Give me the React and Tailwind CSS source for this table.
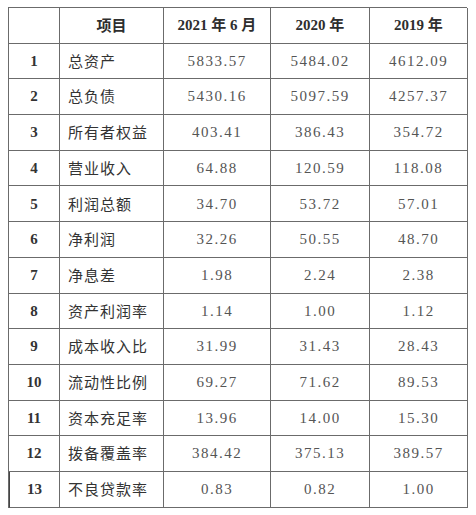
import React from 'react';

const rows = [
  ['1', '总资产', '5833.57', '5484.02', '4612.09'],
  ['2', '总负债', '5430.16', '5097.59', '4257.37'],
  ['3', '所有者权益', '403.41', '386.43', '354.72'],
  ['4', '营业收入', '64.88', '120.59', '118.08'],
  ['5', '利润总额', '34.70', '53.72', '57.01'],
  ['6', '净利润', '32.26', '50.55', '48.70'],
  ['7', '净息差', '1.98', '2.24', '2.38'],
  ['8', '资产利润率', '1.14', '1.00', '1.12'],
  ['9', '成本收入比', '31.99', '31.43', '28.43'],
  ['10', '流动性比例', '69.27', '71.62', '89.53'],
  ['11', '资本充足率', '13.96', '14.00', '15.30'],
  ['12', '拨备覆盖率', '384.42', '375.13', '389.57'],
  ['13', '不良贷款率', '0.83', '0.82', '1.00'],
];

// shared cell look: right + bottom rule, the grid itself draws top + left
const cell = 'flex items-center border-r border-b border-[#6b6b6b] text-[15px]';
const serif = "font-['Liberation_Serif','Noto_Sans_CJK_SC',serif]";
const cjk = "font-['Noto_Sans_CJK_SC',sans-serif]";
const head = `${cell} justify-center font-bold text-[#2e2e2e]`;
const num = `${cell} ${serif} justify-center text-[#555] tracking-[1.5px]`;

const App = () => {
  return (
    <div className="w-[476px] h-[515px] bg-white pt-[7px] pl-[8px]">
      <div className="grid grid-cols-[51px_104px_107px_99px_98px] auto-rows-[35.7px] w-[459px] border-t border-l border-[#6b6b6b]">
        <div className={cell} />
        <div className={`${head} ${cjk}`}>项目</div>
        <div className={`${head} ${serif}`}>2021 年 6 月</div>
        <div className={`${head} ${serif}`}>2020 年</div>
        <div className={`${head} ${serif}`}>2019 年</div>

        {rows.map((r, i) => (
          <React.Fragment key={r[0]}>
            <div className={`${cell} ${serif} justify-center font-bold text-[#333] ${i === 12 ? 'border-l-[1.5px] border-l-[#444]' : ''}`}>{r[0]}</div>
            <div className={`${cell} ${cjk} pl-[8px] text-[#333] tracking-[1px]`}>{r[1]}</div>
            <div className={num}>{r[2]}</div>
            <div className={num}>{r[3]}</div>
            <div className={num}>{r[4]}</div>
          </React.Fragment>
        ))}
      </div>
    </div>
  );
};

export default App;
